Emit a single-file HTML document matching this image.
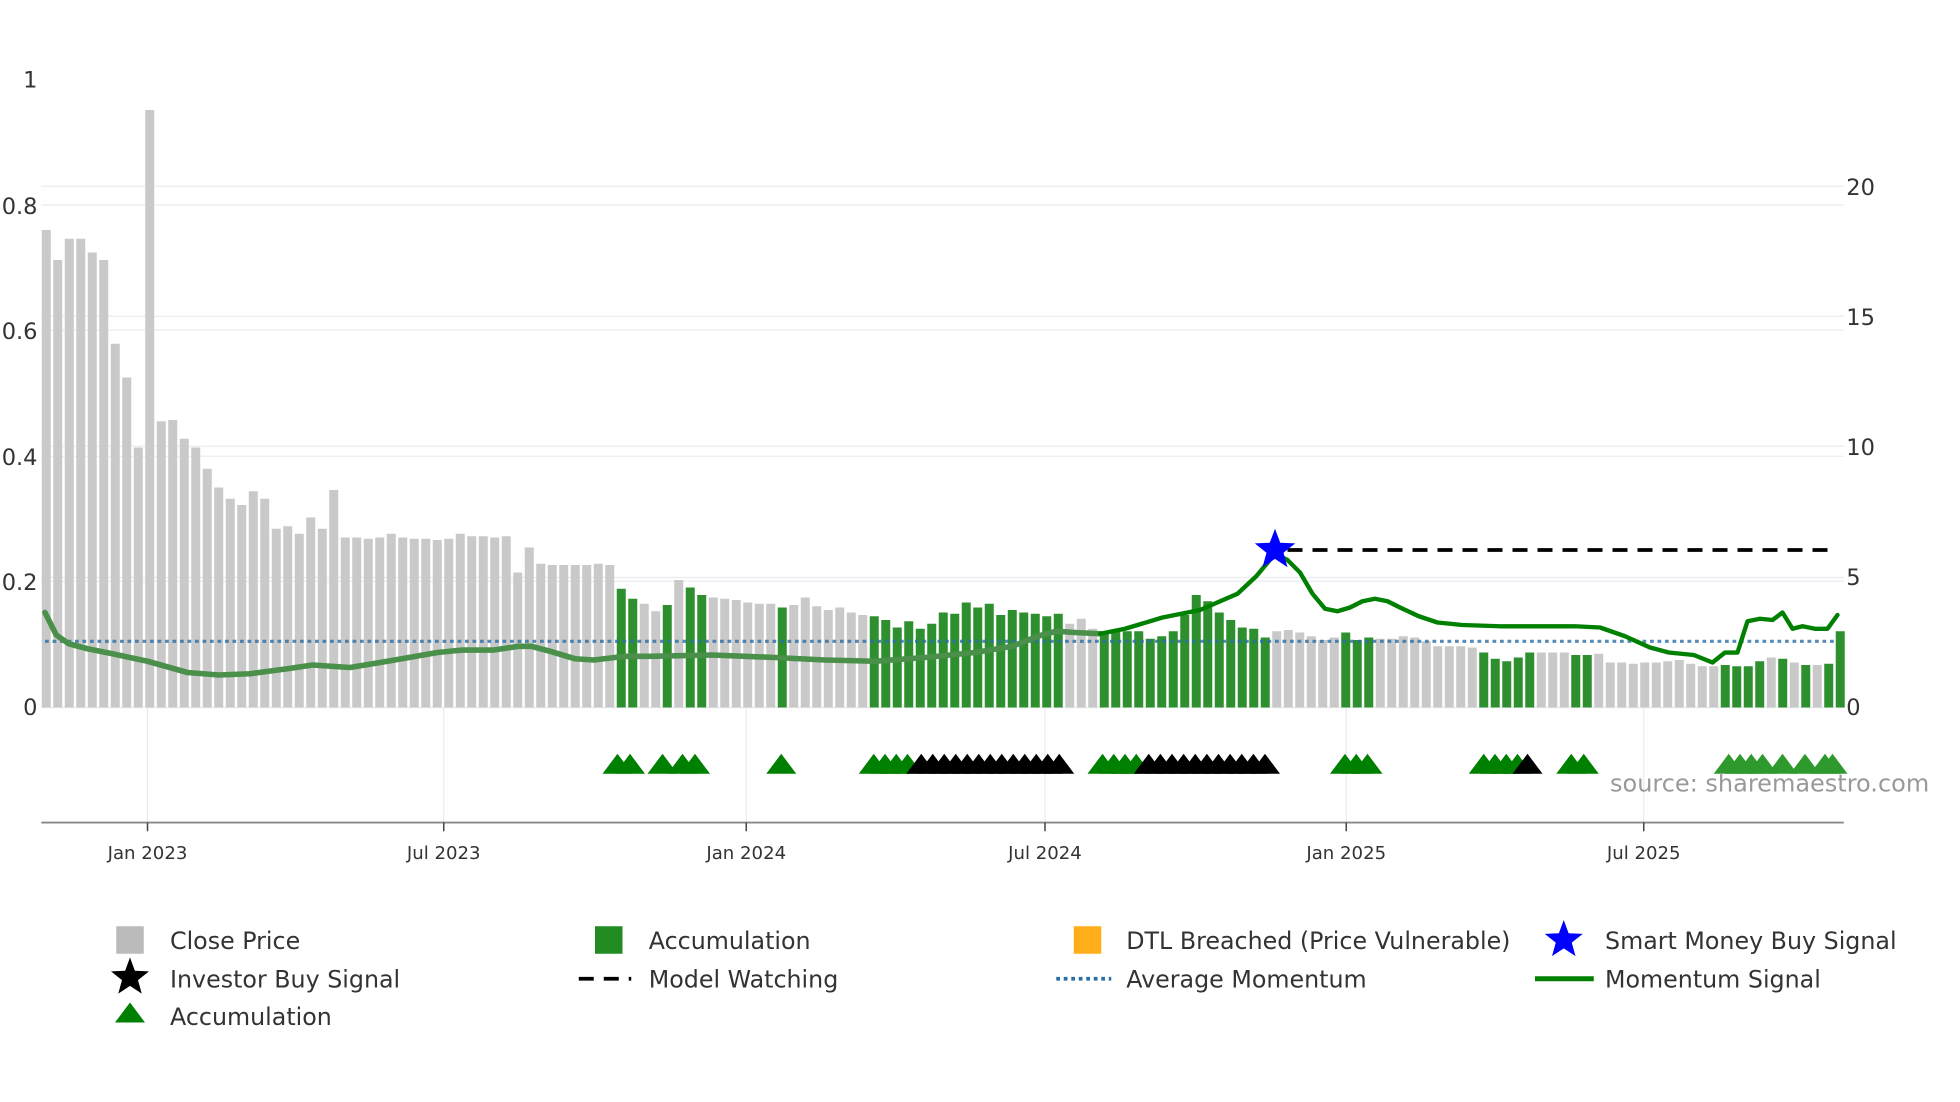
<!DOCTYPE html>
<html><head><meta charset="utf-8">
<style>
html,body{margin:0;padding:0;background:#fff;}
svg{display:block;}
text{font-family:"DejaVu Sans","Liberation Sans",sans-serif;}
</style></head>
<body>
<svg id="s" width="1960" height="1102" viewBox="0 0 1568 881.6" xmlns="http://www.w3.org/2000/svg">
<rect width="1568" height="882" fill="#fff"/>
<g id="grid" stroke="#e8ecf0" stroke-width="1">
<line x1="33" y1="149" x2="1475" y2="149"/>
<line x1="33" y1="164" x2="1475" y2="164"/>
<line x1="33" y1="253" x2="1475" y2="253"/>
<line x1="33" y1="264" x2="1475" y2="264"/>
<line x1="33" y1="357" x2="1475" y2="357"/>
<line x1="33" y1="365" x2="1475" y2="365"/>
<line x1="33" y1="462" x2="1475" y2="462"/>
<line x1="33" y1="465" x2="1475" y2="465"/>
<line x1="33" y1="566" x2="1475" y2="566"/>
<line x1="118" y1="566" x2="118" y2="658"/>
<line x1="355" y1="566" x2="355" y2="658"/>
<line x1="597" y1="566" x2="597" y2="658"/>
<line x1="836" y1="566" x2="836" y2="658"/>
<line x1="1077" y1="566" x2="1077" y2="658"/>
<line x1="1315" y1="566" x2="1315" y2="658"/>
</g>
<g id="bars"></g>
<line x1="36" y1="513" x2="1470" y2="513" stroke="#2a6fa8" stroke-width="2.5" stroke-dasharray="3 3" opacity="0.8"/>
<polyline id="mom1" fill="none" stroke="#4a8f4a" stroke-width="4.5" stroke-linejoin="round" stroke-linecap="round" points=""/>
<polyline id="mom2" fill="none" stroke="#008000" stroke-width="3.5" stroke-linejoin="round" stroke-linecap="round" points=""/>
<line x1="1030" y1="440" x2="1468" y2="440" stroke="#000" stroke-width="3" stroke-dasharray="12 8"/>
<polygon id="bstar" fill="#0000ff" points=""/>
<g id="tri"></g>
<line x1="33" y1="658" x2="1475" y2="658" stroke="#888" stroke-width="1.5"/>
<g stroke="#444" stroke-width="1.2">
<line x1="118" y1="658" x2="118" y2="665"/><line x1="355" y1="658" x2="355" y2="665"/>
<line x1="597" y1="658" x2="597" y2="665"/><line x1="836" y1="658" x2="836" y2="665"/>
<line x1="1077" y1="658" x2="1077" y2="665"/><line x1="1315" y1="658" x2="1315" y2="665"/>
</g>
<g fill="#333" font-size="14.5" text-anchor="middle">
<text x="118" y="687">Jan 2023</text><text x="355" y="687">Jul 2023</text>
<text x="597" y="687">Jan 2024</text><text x="836" y="687">Jul 2024</text>
<text x="1077" y="687">Jan 2025</text><text x="1315" y="687">Jul 2025</text>
</g>
<g fill="#333" font-size="18">
<text x="30" y="70" text-anchor="end">1</text>
<text x="30" y="171" text-anchor="end">0.8</text>
<text x="30" y="271" text-anchor="end">0.6</text>
<text x="30" y="372" text-anchor="end">0.4</text>
<text x="30" y="472" text-anchor="end">0.2</text>
<text x="30" y="572" text-anchor="end">0</text>
<text x="1477" y="156">20</text>
<text x="1477" y="260">15</text>
<text x="1477" y="364">10</text>
<text x="1477" y="468">5</text>
<text x="1477" y="572">0</text>
</g>
<text x="1288" y="633" fill="#999" font-size="19.2">source: sharemaestro.com</text>
<g font-size="19" fill="#333">
<rect x="93" y="741" width="22" height="22" fill="#bbb"/><text x="136" y="759">Close Price</text>
<rect x="476" y="741" width="22" height="22" fill="#228b22"/><text x="519" y="759">Accumulation</text>
<rect x="859" y="741" width="22" height="22" fill="#ffa500" opacity="0.9"/><text x="901" y="759">DTL Breached (Price Vulnerable)</text>
<polygon id="lstar1" fill="#0000ff" points=""/><text x="1284" y="759">Smart Money Buy Signal</text>
<polygon id="lstar2" fill="#000" points=""/><text x="136" y="790">Investor Buy Signal</text>
<line x1="463" y1="783" x2="505" y2="783" stroke="#000" stroke-width="3" stroke-dasharray="12 8"/><text x="519" y="790">Model Watching</text>
<line x1="845" y1="783" x2="889" y2="783" stroke="#2a6fa8" stroke-width="3" stroke-dasharray="3 3"/><text x="901" y="790">Average Momentum</text>
<line x1="1228" y1="783" x2="1275" y2="783" stroke="#008000" stroke-width="4"/><text x="1284" y="790">Momentum Signal</text>
<polygon points="92,818 104,802 116,818" fill="#008000"/><text x="136" y="820">Accumulation</text>
</g>
</svg>
<script>
var NS="http://www.w3.org/2000/svg";
var tops=[184,208,191,191,202,208,275,302,358,88,337,336,351,358,375,390,399,404,393,399,423,421,427,414,423,392,430,430,431,430,427,430,431,431,432,431,427,429,429,430,429,458,438,451,452,452,452,452,451,452,
471,479,483,489,484,464,470,476,478,479,480,482,483,483,486,484,478,485,488,486,490,492,493,496,502,497,503,499,490,491,482,486,483,492,488,490,491,493,491,499,495,503,505,505,505,505,511,509,505,492,476,481,490,496,502,503,510,505,504,506,509,512,510,506,512,510,511,511,509,510,513,517,517,517,518,522,527,529,526,522,522,522,522,524,524,523,530,530,531,530,530,529,528,531,533,533,532,533,533,529,526,527,530,532,532,531,505];
var green=new Set([50,51,54,56,57,64,72,73,74,75,76,77,78,79,80,81,82,83,84,85,86,87,88,92,93,94,95,96,97,98,99,100,101,102,103,104,105,106,113,114,115,125,126,127,128,129,133,134,146,147,148,149,151,153,155,156]);
var bars=document.getElementById('bars');
for(var i=0;i<tops.length;i++){var x=37+i*9.2;var r=document.createElementNS(NS,'rect');
r.setAttribute('x',(x-3.6).toFixed(1));r.setAttribute('y',tops[i]);r.setAttribute('width',7.2);r.setAttribute('height',566-tops[i]);
r.setAttribute('fill',green.has(i)?'#2e8f2e':'#c9c9c9');bars.appendChild(r);}
var pts=[[36,490],[45,508],[55,515],[70,519],[90,523],[118,529],[150,538],[175,540],[200,539],[230,535],[250,532],[280,534],[310,529],[350,522],[370,520],[395,520],[415,517],[425,517],[440,521],[460,527],[475,528],[500,525],[520,525],[570,524],[620,526],[660,528],[700,529],[740,526],[780,522],[810,517],[830,509],[845,505],[860,506],[880,507],[900,503],[930,494],[960,488],[990,475],[1005,461],[1020,443],[1030,448],[1040,458],[1050,475],[1060,487],[1070,489],[1080,486],[1090,481],[1100,479],[1110,481],[1120,486],[1135,493],[1150,498],[1170,500],[1200,501],[1240,501],[1260,501],[1280,502],[1300,509],[1320,518],[1335,522],[1355,524],[1370,530],[1380,522],[1390,522],[1398,497],[1408,495],[1418,496],[1426,490],[1434,503],[1442,501],[1452,503],[1462,503],[1470,492]];
var a=[],b=[];pts.forEach(function(p){if(p[0]<=880)a.push(p.join(','));if(p[0]>=880)b.push(p.join(','));});
document.getElementById('mom1').setAttribute('points',a.join(' '));
document.getElementById('mom2').setAttribute('points',b.join(' '));
function star(cx,cy,R){var s=[];for(var k=0;k<10;k++){var r=k%2?R*0.42:R;var an=-Math.PI/2+k*Math.PI/5;s.push((cx+r*Math.cos(an)).toFixed(1)+','+(cy+r*Math.sin(an)).toFixed(1));}return s.join(' ');}
document.getElementById('bstar').setAttribute('points',star(1020,440,17));
document.getElementById('lstar1').setAttribute('points',star(1251,752,16));
document.getElementById('lstar2').setAttribute('points',star(104,782,16));
var T=[];function add(xs,c){xs.forEach(function(x){T.push([x,c]);});}
add([494,504,530,546,556,625,699,708,717,726],'#008000');
var bl=[];for(var k=0;k<13;k++)bl.push(737+k*9.2);add(bl,'#000');
add([882,891,900,909],'#008000');
bl=[];for(k=0;k<11;k++)bl.push(919+k*9.3);add(bl,'#000');
add([1076,1085,1094,1187,1196,1205,1214],'#008000');add([1222],'#000');add([1257,1267],'#008000');
add([1383,1392,1401,1410,1426,1444,1460,1466],'#2e9a2e');
var tg=document.getElementById('tri');
T.forEach(function(t){var p=document.createElementNS(NS,'polygon');var x=t[0];
p.setAttribute('points',(x-12)+',619 '+x+',603 '+(x+12)+',619');p.setAttribute('fill',t[1]);tg.appendChild(p);});
</script>
</body></html>
